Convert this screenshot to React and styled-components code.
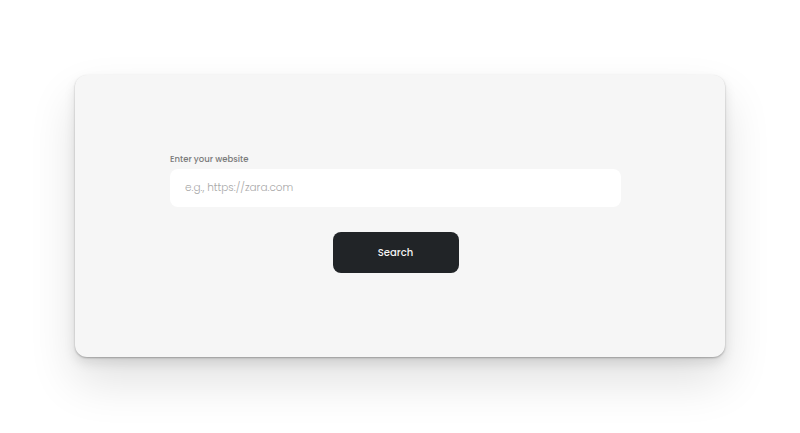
import React from "react";
import styled, { createGlobalStyle } from "styled-components";

const GlobalStyle = createGlobalStyle`
  html, body {
    margin: 0;
    background: #ffffff;
    font-family: "Poppins", "Inter", "Open Sans", sans-serif;
  }
`;

const Page = styled.div`
  width: 800px;
  height: 433px;
  padding: 75px 75px 0;
  box-sizing: border-box;
`;

const Card = styled.div`
  height: 282px;
  background: #f6f6f6;
  border-radius: 12px;
  box-shadow: 0 1px 2px rgba(0, 0, 0, 0.28), 0 6px 12px rgba(0, 0, 0, 0.1),
    0 24px 48px rgba(0, 0, 0, 0.12);
  padding: 78px 104px 0 95px;
  box-sizing: border-box;
  display: flex;
  flex-direction: column;
`;

const Label = styled.label`
  font-size: 8.5px;
  font-weight: 500;
  color: #7a7a7a;
  line-height: 12px;
  margin-bottom: 4px;
`;

const Input = styled.input`
  width: 451px;
  height: 38px;
  border: none;
  outline: none;
  border-radius: 8px;
  background: #ffffff;
  padding: 0 15px;
  box-sizing: border-box;
  font-family: inherit;
  font-size: 10.5px;
  font-weight: 300;
  color: #333;
  &::placeholder {
    color: #a8a8a8;
  }
`;

const Actions = styled.div`
  display: flex;
  justify-content: center;
  margin-top: 25px;
`;

const Button = styled.button`
  width: 126px;
  height: 41px;
  border: none;
  border-radius: 8px;
  background: #212427;
  color: #f4f4f4;
  font-family: inherit;
  font-size: 10px;
  font-weight: 500;
  cursor: pointer;
`;

const App = () => {
  return (
    <Page>
      <GlobalStyle />
      <Card>
        <Label>Enter your website</Label>
        <Input placeholder="e.g., https://zara.com" />
        <Actions>
          <Button>Search</Button>
        </Actions>
      </Card>
    </Page>
  );
};

export default App;
